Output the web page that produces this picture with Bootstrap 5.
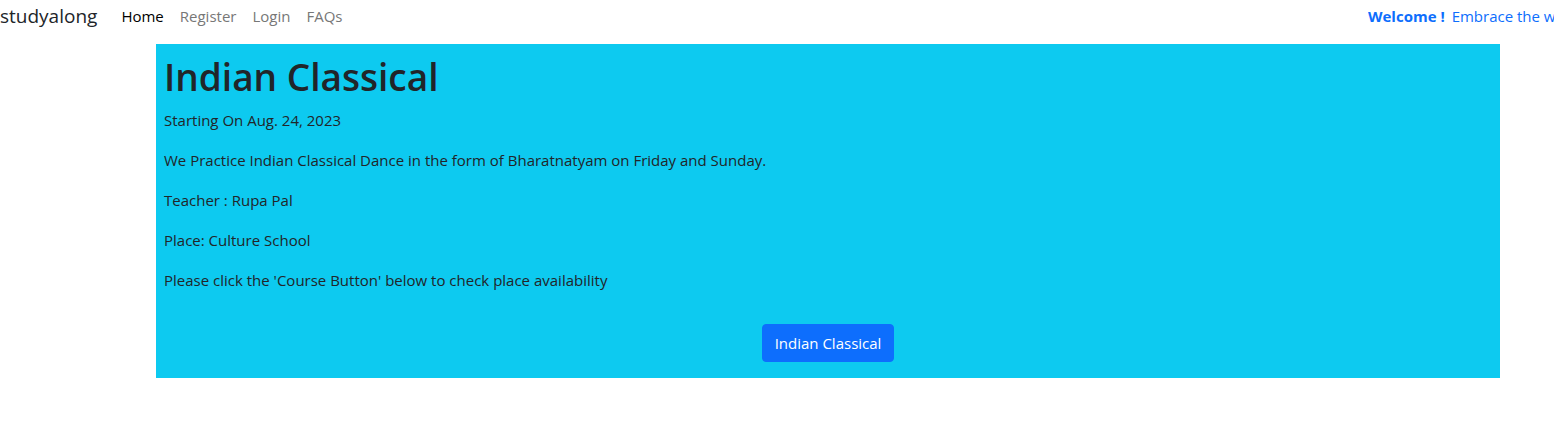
<!DOCTYPE html>
<html lang="en">
<head>
<meta charset="utf-8">
<meta name="viewport" content="width=device-width, initial-scale=1">
<title>studyalong</title>
<link href="https://cdn.jsdelivr.net/npm/bootstrap@5.3.0/dist/css/bootstrap.min.css" rel="stylesheet">
<style>
body { font-family: "Open Sans", "Noto Sans", sans-serif; font-size: 15px; line-height: 24px; overflow-x: hidden; }
.site-nav { --bs-navbar-padding-y: 0; --bs-navbar-brand-padding-y: 0; --bs-navbar-brand-font-size: 19px; --bs-navbar-brand-margin-end: 16px; --bs-navbar-brand-color: #212529; --bs-navbar-color: #777; height: 32px; }
.welcome { flex: 0 0 186px; overflow: hidden; white-space: nowrap; }
.welcome strong { margin-right: 3px; }
.course { margin: 12px 54px 0 156px; }
.course h1 { font-size: 37px; line-height: 50px; font-weight: 600; margin-bottom: 6px; }
.course .btn { --bs-btn-border-radius: 4px; font-size: 15px; line-height: 24px; }
</style>
</head>
<body>
<nav class="navbar navbar-expand navbar-light site-nav">
<a class="navbar-brand" href="#">studyalong</a>
<ul class="navbar-nav me-auto">
<li class="nav-item"><a class="nav-link active" aria-current="page" href="#">Home</a></li>
<li class="nav-item"><a class="nav-link" href="#">Register</a></li>
<li class="nav-item"><a class="nav-link" href="#">Login</a></li>
<li class="nav-item"><a class="nav-link" href="#">FAQs</a></li>
</ul>
<div class="welcome text-primary"><strong>Welcome !</strong> Embrace the w</div>
</nav>
<main class="course bg-info p-2 pb-3">
<h1>Indian Classical</h1>
<p>Starting On Aug. 24, 2023</p>
<p>We Practice Indian Classical Dance in the form of Bharatnatyam on Friday and Sunday.</p>
<p>Teacher : Rupa Pal</p>
<p>Place: Culture School</p>
<p>Please click the 'Course Button' below to check place availability</p>
<div class="text-center pt-3"><button type="button" class="btn btn-primary">Indian Classical</button></div>
</main>
<script src="https://cdn.jsdelivr.net/npm/bootstrap@5.3.0/dist/js/bootstrap.bundle.min.js"></script>
</body>
</html>
